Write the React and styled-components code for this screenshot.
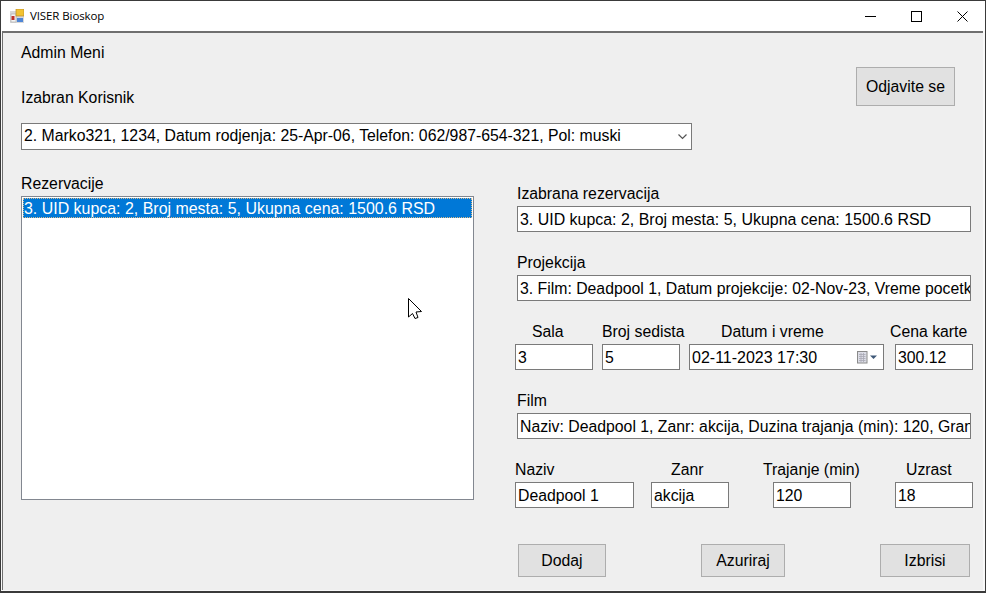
import React from "react";
import styled, { createGlobalStyle } from "styled-components";

const Global = createGlobalStyle`
  html, body { margin: 0; padding: 0; background: #efefef; }
  * { box-sizing: border-box; }
`;

const Win = styled.div`
  position: relative;
  width: 986px;
  height: 593px;
  display: flex;
  flex-direction: column;
  overflow: hidden;
  background: #f8f8f8;
  border: 1px solid #3a3a3a;
  border-bottom-width: 2px;
  color: #000;
  font-family: "Liberation Sans", Arial, sans-serif;
  font-size: 15.8px;
  line-height: 18px;
`;

const TitleBar = styled.header`
  height: 30px;
  flex: none;
  display: flex;
  align-items: center;
  background: #fff;
  padding-left: 9px;
`;

const AppTitle = styled.span`
  margin-left: 6px;
  font-family: "Open Sans", "Noto Sans", sans-serif;
  font-size: 11.5px;
  line-height: 16px;
  letter-spacing: -0.1px;
`;

const WinButtons = styled.div`
  margin-left: auto;
  display: flex;
  height: 100%;
`;

const WinButton = styled.div`
  width: 46px;
  display: flex;
  align-items: center;
  justify-content: center;
  svg { display: block; }
`;

const Client = styled.main`
  flex: 1;
  min-height: 0;
  margin: 0 2px 1px 1px;
  background: #efefef;
  border-left: 1px solid #6f6f6f;
  border-top: 2px solid #6f6f6f;
  padding: 10px 0 0 18px;
  display: flex;
  flex-direction: column;
`;

const Header = styled.section`
  display: flex;
  align-items: flex-start;
`;

const HeaderMain = styled.div`
  width: 671px;
  display: flex;
  flex-direction: column;
`;

const Label = styled.div`
  height: 18px;
  line-height: 20px;
  white-space: nowrap;
  margin-left: ${(p) => p.$x || 0}px;
`;

const Heading = styled(Label)`
  margin-bottom: 27px;
`;

const Select = styled.div`
  margin-top: 17px;
  height: 27px;
  border: 1px solid #7a7a7a;
  background: #fff;
  display: flex;
  align-items: center;
  justify-content: space-between;
  padding: 0 3px 0 2px;
  white-space: nowrap;
`;

const SelectValue = styled.span`
  margin-bottom: 2px;
`;

const ChevronIcon = styled.svg`
  margin-right: 1px;
`;

const Button = styled.button`
  width: ${(p) => p.$w}px;
  height: ${(p) => p.$h || 33}px;
  border: 1px solid #adadad;
  background: #e1e1e1;
  color: #000;
  font: inherit;
  padding: 0;
  flex: none;
`;

const LogoutButton = styled(Button)`
  margin: 24px 0 0 164px;
`;

const Columns = styled.section`
  margin-top: 24px;
  display: flex;
  align-items: flex-start;
`;

const LeftColumn = styled.div`
  width: 453px;
  display: flex;
  flex-direction: column;
  gap: 4px;
`;

const ListBox = styled.div`
  height: 304px;
  border: 1px solid #828790;
  background: #fff;
  padding: 1px;
`;

const ListRow = styled.div`
  height: 20px;
  font-size: 15.95px;
  line-height: 21px;
  padding-left: 1px;
  background: #0078d7;
  color: #fff;
  outline: 1px dotted #d9b98a;
  outline-offset: -1px;
  white-space: nowrap;
`;

const RightColumn = styled.div`
  margin-left: 41px;
  width: 458px;
  padding-top: 10px;
  display: flex;
  flex-direction: column;
  gap: 21px;
`;

const WideField = styled.div`
  margin-left: 2px;
  width: 454px;
  display: flex;
  flex-direction: column;
  gap: 4px;
`;

const Row = styled.div`
  display: flex;
  align-items: flex-start;
`;

const Cell = styled.div`
  width: ${(p) => p.$w}px;
  margin-left: ${(p) => p.$gap || 0}px;
  display: flex;
  flex-direction: column;
  gap: 4px;
`;

const Input = styled.div`
  height: 26px;
  border: 1px solid #7a7a7a;
  background: #fff;
  padding: 0 1px 0 2px;
  font-size: ${(p) => p.$size || 15.8}px;
  line-height: 26px;
  white-space: nowrap;
  overflow: hidden;
`;

const DatePicker = styled(Input)`
  display: flex;
  align-items: center;
  justify-content: space-between;
  padding-right: 6px;
`;

const DateValue = styled.span`
  margin-top: 2px;
  font-size: 16px;
`;

const Actions = styled.div`
  margin: 15px 0 0 3px;
  display: flex;
  gap: 95px;
`;

const Cursor = styled.svg`
  position: absolute;
  left: 407px;
  top: 297px;
`;

const AppIcon = () => (
  <svg width="14" height="14" viewBox="0 0 14 14">
    <rect x="0" y="2" width="14" height="12" fill="#d8d8d8" />
    <rect x="1" y="5" width="5" height="8" fill="#f4f4f4" stroke="#9a9a9a" strokeWidth="0.5" />
    <rect x="1.5" y="7" width="3" height="4" fill="#c0332b" />
    <rect x="6" y="0" width="8" height="7" fill="#f2c230" stroke="#b88a2a" strokeWidth="0.7" />
    <rect x="7" y="9" width="6" height="4" fill="#4f86d6" />
  </svg>
);

const Chevron = () => (
  <ChevronIcon width="9" height="6" viewBox="0 0 9 6">
    <path d="M0.5 0.5 L4.5 4.5 L8.5 0.5" fill="none" stroke="#555" strokeWidth="1.2" />
  </ChevronIcon>
);

const Calendar = () => (
  <svg width="20" height="13" viewBox="0 0 20 13">
    <rect x="0.5" y="0.5" width="9.5" height="11.5" fill="#dcdde6" stroke="#8a8a8a" />
    <path d="M2 3.5h6.5M2 5.5h6.5M2 7.5h6.5M2 9.5h6.5M4 2v9M6.5 2v9" stroke="#a8a8b4" strokeWidth="0.8" />
    <path d="M13 4.5h7L16.5 8z" fill="#3f5878" />
  </svg>
);

const Pointer = () => (
  <Cursor width="14" height="22" viewBox="0 0 14 22">
    <path
      d="M0.5 0.5 V19 L4.5 15.5 L7 20.5 L10 19.5 L8 14 L13.5 13.5 Z"
      fill="#fff"
      stroke="#000"
      strokeWidth="1"
    />
  </Cursor>
);

export default function App() {
  return (
    <Win>
      <Global />
      <TitleBar>
        <AppIcon />
        <AppTitle>VISER Bioskop</AppTitle>
        <WinButtons>
          <WinButton>
            <svg width="11" height="11" viewBox="0 0 11 11"><path d="M0 5.5h11" stroke="#000" /></svg>
          </WinButton>
          <WinButton>
            <svg width="11" height="11" viewBox="0 0 11 11"><rect x="0.5" y="0.5" width="10" height="10" fill="none" stroke="#000" /></svg>
          </WinButton>
          <WinButton>
            <svg width="11" height="11" viewBox="0 0 11 11"><path d="M0.5 0.5l10 10M10.5 0.5l-10 10" stroke="#000" /></svg>
          </WinButton>
        </WinButtons>
      </TitleBar>
      <Client>
        <Header>
          <HeaderMain>
            <Heading>Admin Meni</Heading>
            <Label>Izabran Korisnik</Label>
            <Select>
              <SelectValue>2. Marko321, 1234, Datum rodjenja: 25-Apr-06, Telefon: 062/987-654-321, Pol: muski</SelectValue>
              <Chevron />
            </Select>
          </HeaderMain>
          <LogoutButton $w={99} $h={39}>Odjavite se</LogoutButton>
        </Header>
        <Columns>
          <LeftColumn>
            <Label>Rezervacije</Label>
            <ListBox>
              <ListRow>3. UID kupca: 2, Broj mesta: 5, Ukupna cena: 1500.6 RSD</ListRow>
            </ListBox>
          </LeftColumn>
          <RightColumn>
            <WideField>
              <Label>Izabrana rezervacija</Label>
              <Input $size={15.95}>3. UID kupca: 2, Broj mesta: 5, Ukupna cena: 1500.6 RSD</Input>
            </WideField>
            <WideField>
              <Label>Projekcija</Label>
              <Input>3. Film: Deadpool 1, Datum projekcije: 02-Nov-23, Vreme pocetka: 17:30</Input>
            </WideField>
            <Row>
              <Cell $w={78}>
                <Label $x={17}>Sala</Label>
                <Input>3</Input>
              </Cell>
              <Cell $w={78} $gap={9}>
                <Label>Broj sedista</Label>
                <Input>5</Input>
              </Cell>
              <Cell $w={195} $gap={9}>
                <Label $x={32}>Datum i vreme</Label>
                <DatePicker>
                  <DateValue>02-11-2023 17:30</DateValue>
                  <Calendar />
                </DatePicker>
              </Cell>
              <Cell $w={78} $gap={11}>
                <Label $x={-5}>Cena karte</Label>
                <Input>300.12</Input>
              </Cell>
            </Row>
            <WideField>
              <Label>Film</Label>
              <Input>Naziv: Deadpool 1, Zanr: akcija, Duzina trajanja (min): 120, Granica uzrasta: 18</Input>
            </WideField>
            <Row>
              <Cell $w={119}>
                <Label>Naziv</Label>
                <Input>Deadpool 1</Input>
              </Cell>
              <Cell $w={78} $gap={17}>
                <Label $x={20}>Zanr</Label>
                <Input>akcija</Input>
              </Cell>
              <Cell $w={78} $gap={44}>
                <Label $x={-10}>Trajanje (min)</Label>
                <Input>120</Input>
              </Cell>
              <Cell $w={78} $gap={44}>
                <Label $x={11}>Uzrast</Label>
                <Input>18</Input>
              </Cell>
            </Row>
            <Actions>
              <Button $w={88}>Dodaj</Button>
              <Button $w={84}>Azuriraj</Button>
              <Button $w={90}>Izbrisi</Button>
            </Actions>
          </RightColumn>
        </Columns>
      </Client>
      <Pointer />
    </Win>
  );
}
